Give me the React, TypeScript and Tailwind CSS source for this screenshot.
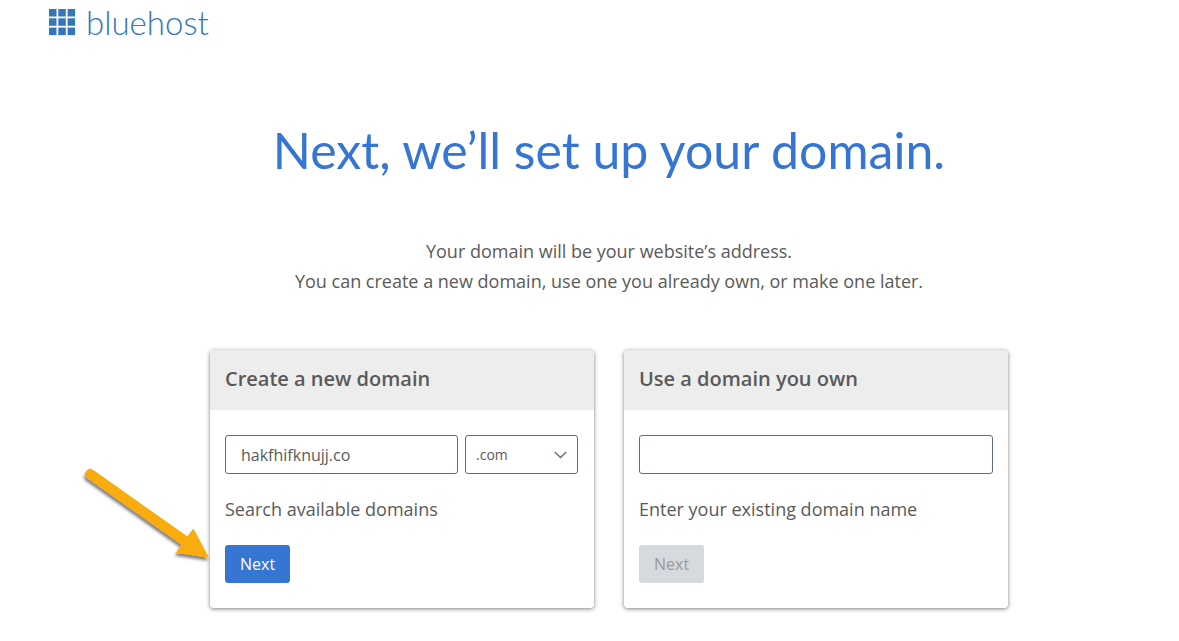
import { useState } from "react";
import type { ReactNode } from "react";

const fieldClass =
  "h-[39px] min-w-0 rounded-[3px] border border-[#5f6b8a] bg-white text-[#5a5a5a] outline-none focus:border-[#3575d3]";

function Logo() {
  return (
    <a href="#" aria-label="bluehost home" className="flex items-center gap-[10px] text-[#3575bb]">
      <svg width="27" height="27" viewBox="0 0 27 27" fill="currentColor" aria-hidden="true">
        {[0, 9.3, 18.6].map((y) =>
          [0, 9.3, 18.6].map((x) => <rect key={`${x}-${y}`} x={x} y={y} width="7.5" height="7.5" />),
        )}
      </svg>
      <span className="font-['Lato',sans-serif] text-[33px] leading-[44px] font-light">bluehost</span>
    </a>
  );
}

function Arrow() {
  return (
    <svg
      className="pointer-events-none absolute top-[110px] left-[-135px] overflow-visible"
      width="145"
      height="110"
      viewBox="0 0 145 110"
      aria-hidden="true"
    >
      <defs>
        <filter id="arrow-shadow" x="-20%" y="-20%" width="140%" height="140%">
          <feDropShadow dx="-1" dy="3" stdDeviation="1.8" floodColor="#000" floodOpacity="0.5" />
        </filter>
      </defs>
      <g fill="#f9ac0a" filter="url(#arrow-shadow)">
        <path d="M18 9.8 L112.5 76.6 L118.5 68.5 L134 97.8 L101 92.8 L106.5 84.8 L12 18 A5.1 5.1 0 0 1 18 9.8 Z" />
      </g>
    </svg>
  );
}

function Card({ title, children }: { title: string; children: ReactNode }) {
  return (
    <section className="overflow-hidden rounded-[4px] bg-white shadow-[0_1px_4px_rgba(0,0,0,0.5)]">
      <h2 className="bg-[#ededed] px-[15px] pt-[14px] pb-4 text-[20px] leading-[30px] font-semibold text-[#5a5a5a]">
        {title}
      </h2>
      <form
        className="flex flex-col items-start px-[15px] py-[25px]"
        onSubmit={(event) => event.preventDefault()}
      >
        {children}
      </form>
    </section>
  );
}

function NextButton({ disabled = false }: { disabled?: boolean }) {
  return (
    <button
      type="submit"
      disabled={disabled}
      className="h-[38px] rounded-[3px] bg-[#3575d3] px-[15px] text-base text-white disabled:bg-[#d6dade] disabled:text-[#999]"
    >
      Next
    </button>
  );
}

export default function App() {
  const [name, setName] = useState("hakfhifknujj.co");
  const [owned, setOwned] = useState("");

  return (
    <div className="bg-white font-['Open_Sans',sans-serif] text-[#5a5a5a]">
      <header className="flex px-[49px]">
        <Logo />
      </header>
      <main className="pr-4 pb-8 pl-[55px]">
        <h1 className="pt-[74px] text-center font-['Lato',sans-serif] text-[50px] leading-[64px] text-[#3575d3]">
          Next, we’ll set up your domain.
        </h1>
        <p className="pt-[54px] text-center text-[18px] leading-[30px]">
          Your domain will be your website’s address.
          <br />
          You can create a new domain, use one you already own, or make one later.
        </p>
        <div className="mx-auto mt-[54px] grid max-w-[798px] grid-cols-2 gap-[30px]">
          <div className="relative">
            <Card title="Create a new domain">
              <div className="flex w-full gap-[7px] pr-px">
                <input
                  id="new-domain"
                  value={name}
                  onChange={(event) => setName(event.target.value)}
                  className={`${fieldClass} flex-1 px-[15px] text-base`}
                />
                <div className="grid w-[113px] items-center">
                  <select
                    aria-label="Domain extension"
                    defaultValue=".com"
                    className={`${fieldClass} col-start-1 row-start-1 w-full appearance-none px-[10px] text-sm`}
                  >
                    <option>.com</option>
                    <option>.net</option>
                    <option>.org</option>
                  </select>
                  <svg
                    className="pointer-events-none col-start-1 row-start-1 mr-[11px] justify-self-end"
                    width="13"
                    height="8"
                    viewBox="0 0 13 8"
                    fill="none"
                    stroke="#5f6b8a"
                    strokeWidth="1.4"
                    aria-hidden="true"
                  >
                    <path d="M0.8 1 L6.5 6.6 L12.2 1" />
                  </svg>
                </div>
              </div>
              <label htmlFor="new-domain" className="my-5 text-[18px] leading-[31px]">
                Search available domains
              </label>
              <NextButton />
            </Card>
            <Arrow />
          </div>
          <Card title="Use a domain you own">
            <input
              id="owned-domain"
              value={owned}
              onChange={(event) => setOwned(event.target.value)}
              className={`${fieldClass} w-full px-[15px] text-base`}
            />
            <label htmlFor="owned-domain" className="my-5 text-[18px] leading-[31px]">
              Enter your existing domain name
            </label>
            <NextButton disabled={owned === ""} />
          </Card>
        </div>
      </main>
    </div>
  );
}
